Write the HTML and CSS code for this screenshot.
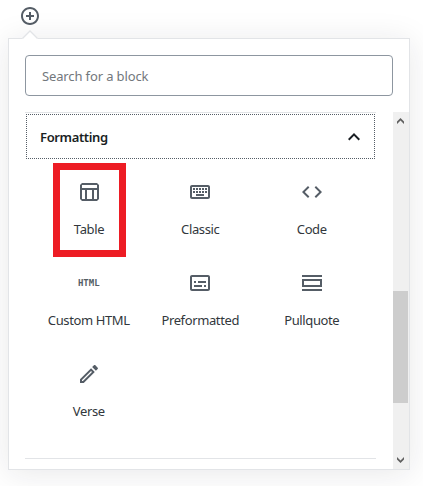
FILE: index.html
```
<!DOCTYPE html>
<html lang="en">
<head>
<meta charset="utf-8">
<title>Block inserter</title>
<link rel="stylesheet" href="styles.css">
</head>
<body>
<button class="toggle" aria-label="Add block"><svg width="20" height="20" viewBox="0 0 20 20"><path d="M10 1c-5 0-9 4-9 9s4 9 9 9 9-4 9-9-4-9-9-9zm0 16c-3.900 0-7-3.100-7-7s3.100-7 7-7 7 3.100 7 7-3.100 7-7 7zm1-11H9v3H6v2h3v3h2v-3h3V9h-3V6z"/></svg></button>
<main class="panel">
  <svg class="pointer" width="16" height="9" viewBox="0 0 16 9"><path class="pointer-fill" d="M0 9 8 1l8 8z"/><path class="pointer-line" d="M.5 8.500 8 1l7.500 7.500"/></svg>
  <input class="search" type="text" placeholder="Search for a block">
  <div class="results">
    <section class="category">
      <button class="heading"><span>Formatting</span><svg width="24" height="24" viewBox="0 0 24 24"><path d="M12 8l-6 6 1.410 1.410L12 10.830l4.590 4.580L18 14z"/></svg></button>
      <ul class="blocks">
        <li class="block highlighted"><svg viewBox="0 0 24 24"><path d="M20 3H5L3 5v14l2 2h15l2-2V5l-2-2zm0 2v3H5V5h15zm-5 14h-5v-9h5v9zM5 10h3v9H5v-9zm12 9v-9h3v9h-3z"/></svg><span>Table</span></li>
        <li class="block"><svg viewBox="0 0 24 24"><path d="M20 7v10H4V7h16m0-2H4c-1.100 0-1.990.9-1.990 2L2 17c0 1.100.9 2 2 2h16c1.100 0 2-.9 2-2V7c0-1.100-.9-2-2-2zm-9 3h2v2h-2zm0 3h2v2h-2zM8 8h2v2H8zm0 3h2v2H8zm-3 0h2v2H5zm0-3h2v2H5zm3 6h8v2H8zm6-3h2v2h-2zm0-3h2v2h-2zm3 3h2v2h-2zm0-3h2v2h-2z"/></svg><span>Classic</span></li>
        <li class="block"><svg viewBox="0 0 24 24"><path d="M9.400 16.600 4.800 12l4.600-4.600L8 6l-6 6 6 6 1.400-1.400zm5.200 0 4.600-4.600-4.600-4.600L16 6l6 6-6 6-1.400-1.400z"/></svg><span>Code</span></li>
        <li class="block"><b class="html-icon">HTML</b><span>Custom HTML</span></li>
        <li class="block"><svg viewBox="0 0 24 24"><path d="M20 4H4c-1.100 0-2 .9-2 2v12c0 1.100.9 2 2 2h16c1.100 0 2-.9 2-2V6c0-1.100-.9-2-2-2zm0 14H4V6h16v12zM6 10h2v2H6zm0 4h8v2H6zm10 0h2v2h-2zm-6-4h8v2h-8z"/></svg><span>Preformatted</span></li>
        <li class="block"><svg viewBox="0 0 24 24"><path d="M2 4h20v2H2zm0 14h20v2H2zM2 8v8h20V8H2zm18 6H4v-4h16v4z"/></svg><span>Pullquote</span></li>
        <li class="block"><svg viewBox="0 0 24 24"><path d="M3 17.250V21h3.750L17.810 9.940l-3.750-3.750L3 17.250zM5.920 19H5v-.92l9.060-9.060.92.92L5.920 19zM20.710 5.630l-2.340-2.340c-.2-.2-.45-.29-.71-.29s-.51.1-.7.290l-1.830 1.830 3.750 3.750 1.830-1.830c.39-.39.39-1.020 0-1.410z"/></svg><span>Verse</span></li>
      </ul>
    </section>
    <div class="scrollbar">
      <svg width="7" height="6" viewBox="0 0 7 6"><path d="M0 3.500 3.500 0 7 3.500V6L3.500 2.500 0 6z"/></svg>
      <i class="thumb"></i>
      <svg width="7" height="6" viewBox="0 0 7 6"><path d="M0 2.500 3.500 6 7 2.500V0L3.500 3.500 0 0z"/></svg>
    </div>
  </div>
</main>
</body>
</html>
```
FILE: styles.css
```
* { box-sizing: border-box; }
body { margin: 0; height: 486px; overflow: hidden; background: #fff; font: 13px/18px "Noto Sans", sans-serif; color: #32373c; }
button { border: 0; padding: 0; background: none; font: inherit; }
svg { display: block; fill: #555d66; }
.toggle { display: block; width: 20px; height: 20px; margin: 6px 0 12px 19.500px; }
.panel { position: relative; width: 402px; height: 432px; margin-left: 8px; padding: 16px 0 0 16px; border: 1px solid #e2e4e7; background: #fff; box-shadow: 0 3px 30px rgba(25, 30, 35, .1); }
.pointer { position: absolute; left: 13px; top: -9px; }
.pointer-fill { fill: #fff; }
.pointer-line { fill: none; stroke: #e2e4e7; stroke-width: 1.300; }
.search { display: block; width: 368px; height: 41px; padding: 0 16px; border: 1px solid #8d96a0; border-radius: 4px; font: inherit; letter-spacing: -.13px; color: #32373c; }
.search::placeholder { color: #72777c; opacity: 1; }
.results { display: flex; justify-content: space-between; height: 357px; margin-top: 16px; }
.category { width: 351px; height: 347px; border-top: 1px solid #e2e4e7; border-bottom: 1px solid #e2e4e7; }
.heading { display: flex; justify-content: space-between; align-items: center; width: 349px; height: 45px; margin: 1px 0 0 1px; padding: 0 8px 0 13px; border: 1px dotted #555d66; color: #191e23; font-weight: 600; letter-spacing: -.36px; }
.heading svg { fill: #191e23; }
.blocks { display: grid; grid-template-columns: repeat(3, 111.500px); grid-auto-rows: 91px; margin: 4px 0 0 8px; padding: 0; list-style: none; }
.block { display: flex; flex-direction: column; align-items: center; padding-top: 17px; }
.block svg { width: 24px; height: 24px; }
.block span { margin-top: 16px; white-space: nowrap; letter-spacing: -.38px; }
.highlighted { width: 73px; height: 94px; margin-left: 20px; padding: 10px 1px 0 0; border: 7px solid #ed1c24; }
.html-icon { height: 24px; font: 700 9px/24px "DejaVu Sans Mono", monospace; color: #555d66; }
.scrollbar { display: flex; flex-direction: column; align-items: center; justify-content: space-between; width: 16px; padding: 6px 1px 6px 0; background: #f0f0f0; }
.scrollbar svg { fill: #606060; }
.thumb { width: 15px; height: 112px; margin-top: 112px; background: #cdcdcd; }
```
